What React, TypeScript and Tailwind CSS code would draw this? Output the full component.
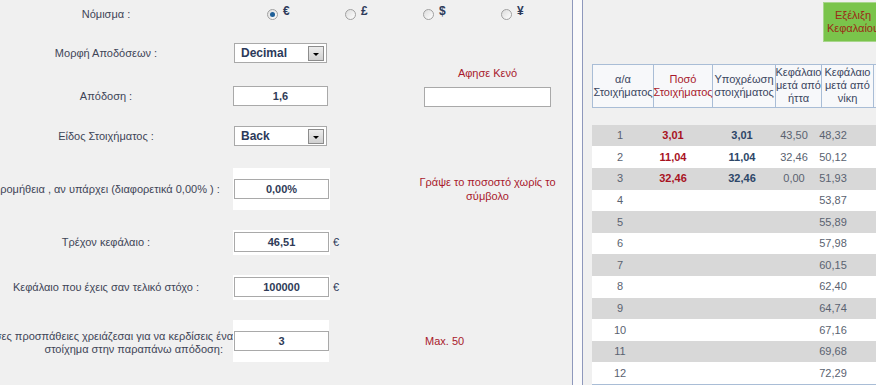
import React from "react";

const label = "text-[#3e4557]";
const red = "text-[#a8192c]";

function Radio({ sym, checked }: { sym: string; checked?: boolean }) {
  return (
    <div className="flex w-[78px] shrink-0 items-center gap-[5px]">
      <span className="flex h-[11px] w-[11px] items-center justify-center rounded-full border border-[#a0a0a0] bg-gradient-to-br from-[#dcdcdc] to-white">
        {checked && <span className="h-[5px] w-[5px] rounded-full bg-[#1f5f98]" />}
      </span>
      <span className="-mt-[6px] text-[12px] font-bold text-[#2c3a5a]">{sym}</span>
    </div>
  );
}

function Field({ value }: { value: string }) {
  return (
    <input
      readOnly
      value={value}
      className="h-[20px] w-[95px] border border-[#a9a9a9] bg-white text-center text-[11px] font-bold text-[#2f3b57] outline-none"
    />
  );
}

function Select({ value }: { value: string }) {
  return (
    <div className="ml-[1px] flex h-[20px] w-[93px] items-center border border-[#a9a9a9] bg-white pl-[6px] text-[12px] font-bold text-[#2c3a5a]">
      {value}
      <span className="mr-[2px] ml-auto flex h-[15px] w-[16px] items-center justify-center border border-[#8c8c8c] bg-gradient-to-b from-[#ececec] to-[#d0d0d0]">
        <span className="mt-[2px] h-0 w-0 border-x-[3px] border-t-[3px] border-x-transparent border-t-black" />
      </span>
    </div>
  );
}

function Row({
  h,
  text,
  children,
  extra,
  note,
}: {
  h: string;
  text: React.ReactNode;
  children: React.ReactNode;
  extra?: React.ReactNode;
  note?: React.ReactNode;
}) {
  return (
    <div className={`flex items-center ${h}`}>
      <div className={`flex w-[212px] shrink-0 justify-center whitespace-nowrap ${label}`}>{text}</div>
      <div className="w-[21px] shrink-0" />
      <div className="w-[96px] shrink-0">{children}</div>
      <div className="w-[95px] shrink-0 pl-[4px] text-[11px] text-[#2c3a5a]">{extra}</div>
      <div className="flex w-[127px] shrink-0 justify-center whitespace-nowrap text-center">{note}</div>
    </div>
  );
}

const rows: [string, string, string, string, string][] = [
  ["1", "3,01", "3,01", "43,50", "48,32"],
  ["2", "11,04", "11,04", "32,46", "50,12"],
  ["3", "32,46", "32,46", "0,00", "51,93"],
  ["4", "", "", "", "53,87"],
  ["5", "", "", "", "55,89"],
  ["6", "", "", "", "57,98"],
  ["7", "", "", "", "60,15"],
  ["8", "", "", "", "62,40"],
  ["9", "", "", "", "64,74"],
  ["10", "", "", "", "67,16"],
  ["11", "", "", "", "69,68"],
  ["12", "", "", "", "72,29"],
];

export default function App() {
  return (
    <div className="flex h-[385px] w-[876px] overflow-hidden bg-[#f0f0f0] font-['Liberation_Sans',Arial,sans-serif] text-[11px] leading-[13px]">
      {/* left form */}
      <div className="w-[572px] shrink-0">
        <div className="flex h-[28px] items-center">
          <div className={`flex w-[212px] shrink-0 justify-center ${label}`}>Νόμισμα :</div>
          <div className="flex pl-[55px]">
            <Radio sym="€" checked />
            <Radio sym="£" />
            <Radio sym="$" />
            <Radio sym="¥" />
          </div>
        </div>

        <Row h="h-[50px]" text="Μορφή Αποδόσεων :">
          <Select value="Decimal" />
        </Row>

        <div className="flex h-[36px] items-center">
          <div className={`flex w-[212px] shrink-0 justify-center ${label}`}>Απόδοση :</div>
          <div className="w-[21px] shrink-0" />
          <div className="w-[96px] shrink-0">
            <Field value="1,6" />
          </div>
          <div className="w-[95px] shrink-0" />
          <div className="flex w-[127px] shrink-0 flex-col items-center gap-[7px] self-end pb-[7px]">
            <span className={red}>Αφησε Κενό</span>
            <input readOnly value="" className="h-[20px] w-[127px] border border-[#a9a9a9] bg-white outline-none" />
          </div>
        </div>

        <Row h="h-[44px]" text="Είδος Στοιχήματος :">
          <Select value="Back" />
        </Row>

        <Row
          h="h-[62px]"
          text="Προμήθεια , αν υπάρχει (διαφορετικά 0,00% ) :"
          note={
            <span className={`${red} leading-[14px]`}>
              Γράψε το ποσοστό χωρίς το
              <br />
              σύμβολο
            </span>
          }
        >
          <div className="flex h-[42px] w-[97px] items-center bg-white pl-[1px]">
            <Field value="0,00%" />
          </div>
        </Row>

        <Row h="h-[44px]" text="Τρέχον κεφάλαιο :" extra="€">
          <div className="flex h-[25px] w-[97px] items-center bg-white pl-[1px]">
            <Field value="46,51" />
          </div>
        </Row>

        <Row h="h-[46px]" text="Κεφάλαιο που έχεις σαν τελικό στόχο :" extra="€">
          <div className="flex h-[25px] w-[97px] items-center bg-white pl-[1px]">
            <Field value="100000" />
          </div>
        </Row>

        <div className="flex h-[62px] items-center">
          <div className={`flex w-[233px] shrink-0 flex-col items-end whitespace-nowrap pt-[4px] ${label}`}>
            <span>Σε πόσες προσπάθειες χρειάζεσαι για να κερδίσεις ένα</span>
            <span className="mr-[10px]">στοίχημα στην παραπάνω απόδοση:</span>
          </div>
          <div className="flex h-[42px] w-[96px] shrink-0 items-center bg-white pl-[1px]">
            <Field value="3" />
          </div>
          <div className="w-[95px] shrink-0" />
          <div className={`w-[127px] shrink-0 pl-[1px] ${red}`}>Max. 50</div>
        </div>
      </div>

      {/* divider */}
      <div className="w-[11px] shrink-0 border-x border-[#8e98bc] bg-[#fafafb]" />

      {/* right table */}
      <div className="flex min-w-0 flex-1 flex-col pl-[9px]">
        <div className="flex h-[64px] items-start pt-[2px]">
          <div className="ml-[231px] flex h-[40px] w-[60px] shrink-0 flex-col items-center justify-center border border-[#a8d68c] bg-[#7ac44b] text-[#9b2b16]">
            <span>Εξέλιξη</span>
            <span>Κεφαλαίου</span>
          </div>
        </div>

        <div className="flex h-[44px] w-[300px] shrink-0 whitespace-nowrap border border-[#a9bdd6] bg-[#f7f8fa] text-center text-[#3a4660]">
          <div className="flex w-[61px] shrink-0 flex-col items-center justify-center border-r border-[#a9bdd6]">
            <span>α/α</span>
            <span>Στοιχήματος</span>
          </div>
          <div className={`flex w-[59px] shrink-0 flex-col items-center justify-center border-r border-[#a9bdd6] ${red}`}>
            <span>Ποσό</span>
            <span>Στοιχήματος</span>
          </div>
          <div className="flex w-[63px] shrink-0 flex-col items-center justify-center border-r border-[#a9bdd6]">
            <span>Υποχρέωση</span>
            <span>στοιχήματος</span>
          </div>
          <div className="flex w-[46px] shrink-0 flex-col items-center justify-center border-r border-[#a9bdd6]">
            <span>Κεφάλαιο</span>
            <span>μετά από</span>
            <span>ήττα</span>
          </div>
          <div className="flex w-[52px] shrink-0 flex-col items-center justify-center border-r border-[#a9bdd6]">
            <span>Κεφάλαιο</span>
            <span>μετά από</span>
            <span>νίκη</span>
          </div>
        </div>

        <div className="mt-[17px] w-[300px] border-b border-[#a9bdd6]">
          {rows.map((r, i) => (
            <div
              key={r[0]}
              className={`grid h-[21.6px] grid-cols-[56px_50px_14px_60px_44px_34px_1fr] items-center text-[#5a6270] ${
                i % 2 === 0 ? "bg-[#d8d8d8]" : "bg-white"
              }`}
            >
              <span className="flex justify-center">{r[0]}</span>
              <span className="flex justify-center font-bold text-[#a8121f]">{r[1]}</span>
              <span />
              <span className="flex justify-center font-bold text-[#2d4668]">{r[2]}</span>
              <span className="flex justify-center">{r[3]}</span>
              <span className="flex justify-center">{r[4]}</span>
              <span />
            </div>
          ))}
        </div>
      </div>
    </div>
  );
}
